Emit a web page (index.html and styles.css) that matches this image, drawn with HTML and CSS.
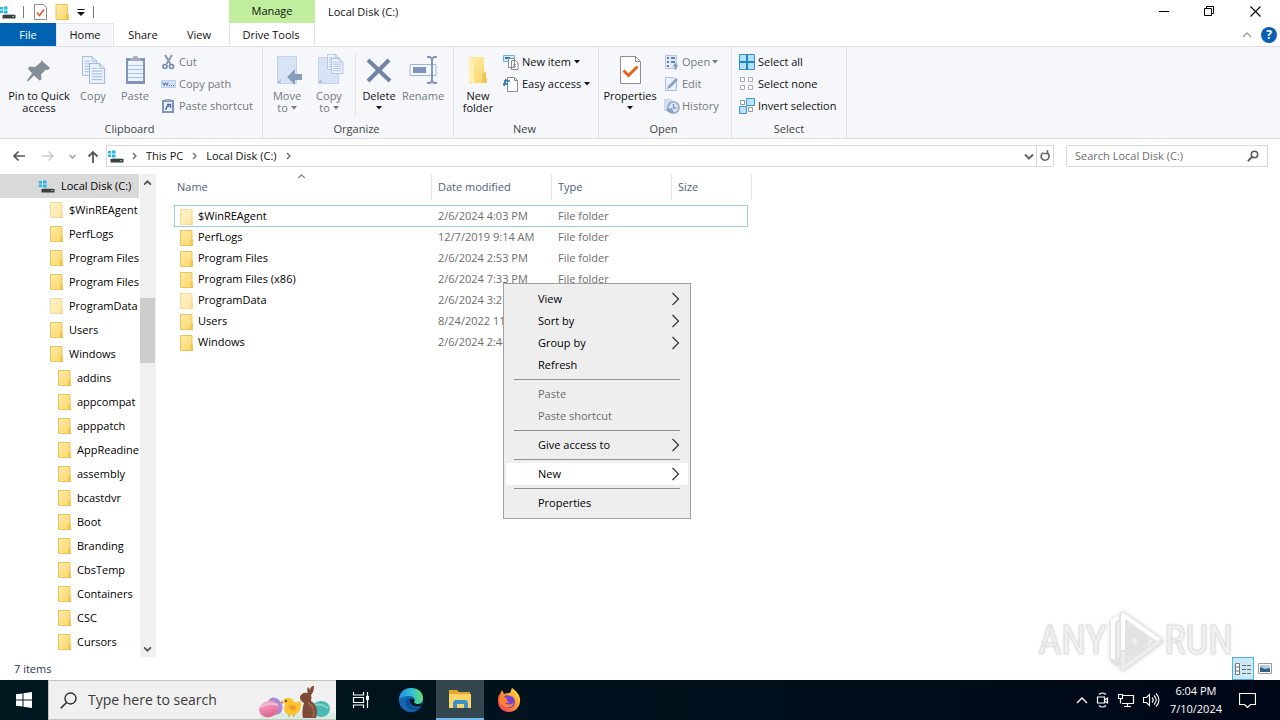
FILE: index.html
```html
<!DOCTYPE html>
<html lang="en">
<head>
<meta charset="utf-8">
<title>Local Disk (C:)</title>
<link rel="stylesheet" href="styles.css">
</head>
<body>
<svg class="defs" aria-hidden="true">
  <defs>
    <linearGradient id="gold" x1="0" y1="0" x2="1" y2="1"><stop offset="0" stop-color="#ffecaa"/><stop offset="1" stop-color="#fbd565"/></linearGradient>
    <linearGradient id="egg" x1="0" y1="0" x2="0" y2="1"><stop offset="0" stop-color="#f3a7c2"/><stop offset="1" stop-color="#e0608f"/></linearGradient>
    <linearGradient id="edgeA" x1="0" y1="0" x2="1" y2="0"><stop offset="0" stop-color="#1d8fdc"/><stop offset=".55" stop-color="#35c1d0"/><stop offset="1" stop-color="#66e06a"/></linearGradient>
    <linearGradient id="fire" x1="1" y1="0" x2="0" y2="1"><stop offset="0" stop-color="#fff04f"/><stop offset=".45" stop-color="#ff9a2b"/><stop offset="1" stop-color="#f0286a"/></linearGradient>
  </defs>
  <symbol id="folder" viewBox="0 0 13 16"><path d="M.5.5h11.500v9l1 1v5H.5z" fill="url(#gold)" stroke="#e8c55c"/><path d="M10.500 15.500V11l1.500-1.500 1 1.500v4.500z" fill="#f6cd58" stroke="#e3b94a" stroke-width=".6"/></symbol>
  <symbol id="drive" viewBox="0 0 16 13"><path d="M0 1h3v2.500H0zM4 .5h3.500v3H4zM0 4.500h3V7H0zM4 4.500h3.500v3H4z" fill="#20b7e6"/><path d="M3 9l2-1h9l1.500 1.500H2z" fill="#b9bcc0"/><path d="M2.500 9H15.500V12.500H2.500z" fill="#3b3f42"/><path d="M12 10h2v1h-2z" fill="#5fd35f"/></symbol>
  <symbol id="sheet" viewBox="0 0 18 22"><path d="M.5.5h11l5 5v16H.5z" fill="#edf3fc" stroke="#9cb1d3"/><path d="M11.500.5v5h5M3 5.500h6M3 8.500h11M3 11.500h11M3 14.500h11M3 17.500h11" fill="none" stroke="#9bb5df"/></symbol>
  <symbol id="right" viewBox="0 0 9 14"><path d="M1.500 1l6 6-6 6" fill="none" stroke="#333" stroke-width="1.200"/></symbol>
  <symbol id="tiny" viewBox="0 0 5 8"><path d="M1 1l3 3-3 3" fill="none" stroke="#666" stroke-width="1.300"/></symbol>
  <symbol id="down" viewBox="0 0 6 4"><path d="M0 0h6L3 3.500z" fill="currentColor"/></symbol>
  <symbol id="chev" viewBox="0 0 10 7"><path d="M1 1.500l4 4 4-4" fill="none" stroke="currentColor" stroke-width="2"/></symbol>
  <symbol id="up" viewBox="0 0 10 6"><path d="M1 5l4-4 4 4" fill="none" stroke="currentColor" stroke-width="1.300"/></symbol>
  <symbol id="arrow" viewBox="0 0 14 12"><path d="M13 6H2M6.500 1.500L2 6l4.500 4.500" fill="none" stroke="currentColor" stroke-width="1.700"/></symbol>
</svg>

<div class="window">
  <header class="titlebar">
    <div class="quick">
      <svg width="16" height="13"><use href="#drive"/></svg>
      <i class="bar"></i>
      <button aria-label="Properties"><svg width="13" height="16" viewBox="0 0 13 16"><path d="M.5.5h9l3 3v12H.5z" fill="#fff" stroke="#8b8b8b"/><path d="M3 8.500l2.500 3L10 5.500" fill="none" stroke="#e2552a" stroke-width="1.600"/></svg></button>
      <button aria-label="New folder"><svg width="14" height="16"><use href="#folder"/></svg></button>
      <button aria-label="Customize"><svg width="8" height="8" viewBox="0 0 8 8"><path d="M.5 1.500h7" stroke="#111"/><path d="M0 4h8L4 8z" fill="#111"/></svg></button>
      <i class="bar"></i>
    </div>
    <div class="manage">Manage</div>
    <h1>Local Disk (C:)</h1>
    <div class="caption">
      <button aria-label="Minimize"><svg width="11" height="11" viewBox="0 0 11 11"><path d="M0 5.500h10" stroke="#000"/></svg></button>
      <button aria-label="Restore"><svg width="11" height="11" viewBox="0 0 11 11"><path d="M.5 2.500h7v7h-7zM2.500 2.500v-2h7v7h-2" fill="none" stroke="#000"/></svg></button>
      <button aria-label="Close"><svg width="11" height="11" viewBox="0 0 11 11"><path d="M.5.5l10 10M10.500.5l-10 10" stroke="#000" stroke-width="1.100"/></svg></button>
    </div>
  </header>
  <nav class="tabs">
    <button class="file">File</button>
    <button class="home">Home</button>
    <button>Share</button>
    <button class="view">View</button>
    <button class="tools">Drive Tools</button>
    <div class="help">
      <button aria-label="Collapse ribbon"><svg width="10" height="6"><use href="#up"/></svg></button>
      <button class="q" aria-label="Help">?</button>
    </div>
  </nav>

  <section class="ribbon">
    <div class="group g-clip">
      <div class="tools-row">
        <button class="big w72"><svg width="32" height="32" viewBox="0 0 32 32"><path d="M18 6l9 8-2 2-2-.5-5 5 .5 5-2 1-5.500-5-6 6-1-1 5-7-4-5 1.500-2 5.500.5 6-5z" fill="#858d96"/></svg><span>Pin to Quick access</span></button>
        <button class="big w36 off"><svg width="32" height="32" viewBox="0 0 32 32"><use href="#sheet" x="5" y="2" width="16" height="20"/><use href="#sheet" x="12" y="9" width="17" height="21"/></svg><span>Copy</span></button>
        <button class="big w48 off"><svg width="32" height="32" viewBox="0 0 32 32"><path d="M7 4h19v26H7z" fill="#8295b8"/><path d="M9 7h15v20H9z" fill="#edf3fd"/><path d="M11 4h3c0-3 5-3 5 0h3v3H11z" fill="#a4abb4"/><path d="M9 11.500h15M9 15.500h15M9 19.500h15M9 23.500h15" stroke="#a9c0e8"/></svg><span>Paste</span></button>
        <div class="stack off">
          <button><svg width="16" height="16" viewBox="0 0 16 16"><path d="M4 1l5.500 9M11 1L5.500 10" stroke="#8799b7" stroke-width="2"/><circle cx="4" cy="12.500" r="2" fill="none" stroke="#7183b3" stroke-width="1.600"/><circle cx="10.500" cy="12.500" r="2" fill="none" stroke="#7183b3" stroke-width="1.600"/></svg>Cut</button>
          <button><svg width="16" height="16" viewBox="0 0 16 16"><path d="M.5 4.500h14v7H.5z" fill="#d2dff5" stroke="#bdcce8"/><path d="M2 6.500l1 3 1.500-3 1.500 3 1-3M8 9.500h1M10 9.500h1M12 9.500h1" fill="none" stroke="#5871a5"/></svg>Copy path</button>
          <button><svg width="16" height="16" viewBox="0 0 16 16"><path d="M1 2h12v13H1z" fill="#8194b9"/><path d="M3 4h8v9H3z" fill="#eef3fb"/><path d="M4 1h6v2H4z" fill="#9da9bd"/><path d="M5 12c0-3 1-4 3-4M6 6.500h3.500V10" fill="none" stroke="#426aa9" stroke-width="1.500"/></svg>Paste shortcut</button>
        </div>
      </div>
      <div class="label">Clipboard</div>
    </div>
    <div class="group g-org">
      <div class="tools-row">
        <button class="big w42 off"><svg width="32" height="32" viewBox="0 0 32 32"><path d="M6.500 2.500h19v27h-19z" fill="#d8e4f6" stroke="#c5d3ea"/><path d="M6 28l4-3v4H6z" fill="#b3c4e3"/><path d="M16 23l8-8v5h7v6h-7v5z" fill="#899ebf"/></svg><span>Move<br>to <svg width="6" height="4"><use href="#down"/></svg></span></button>
        <button class="big w42 off"><svg width="32" height="32" viewBox="0 0 32 32"><path d="M5.500 3.500h20v26h-20z" fill="#d8e4f6" stroke="#c5d3ea"/><path d="M5 28l4-3v4H5z" fill="#b3c4e3"/><use href="#sheet" x="14" y="0" width="13" height="16"/><use href="#sheet" x="18" y="4" width="13" height="16"/></svg><span>Copy<br>to <svg width="6" height="4"><use href="#down"/></svg></span></button>
        <i class="divide"></i>
        <button class="big w42"><svg width="32" height="32" viewBox="0 0 32 32"><path d="M5 6l22 21M26 6L5 27" stroke="#7184a4" stroke-width="4"/></svg><span>Delete<br><svg width="6" height="4"><use href="#down"/></svg></span></button>
        <button class="big w46 off"><svg width="32" height="32" viewBox="0 0 32 32"><path d="M3 10.500h26v11H3z" fill="#f7f9fd" stroke="#9cb4dc"/><path d="M6 13h13v6H6z" fill="#7b93be"/><path d="M20 3h3l2 2 2-2h3M25 5v23M20 29h3l2-2 2 2h3" fill="none" stroke="#8396b3" stroke-width="2"/></svg><span>Rename</span></button>
      </div>
      <div class="label">Organize</div>
    </div>
    <div class="group g-new">
      <div class="tools-row">
        <button class="big w42"><svg width="32" height="32" viewBox="0 0 32 32"><path d="M7 3h15v18l3 3v5H7z" fill="url(#gold)"/><path d="M7 3l5 5v22l-5-3z" fill="#fff0b4"/><path d="M20 29v-9l4-3v12z" fill="#efc654"/></svg><span>New folder</span></button>
        <div class="stack">
          <button><svg width="16" height="16" viewBox="0 0 16 16"><path d="M.5 1.500h11v6H.5z" fill="#d5ebfa" stroke="#70aecf"/><path d="M2 4h5" stroke="#207fae" stroke-width="2"/><path d="M5.500 4.500h6v9h-6zM8.500 6.500h4l2.500 2.500v6.500H8.500z" fill="#fff" stroke="#858b92"/><path d="M10 10.500h3M10 12.500h3" stroke="#999"/></svg>New item <svg width="6" height="4"><use href="#down"/></svg></button>
          <button><svg width="16" height="16" viewBox="0 0 16 16"><path d="M4.500 1.500h7l3 3v11h-10z" fill="#fff" stroke="#848b94"/><path d="M11.500 1.500v3h3" fill="none" stroke="#848b94"/><path d="M1 5h6M0 8h5M3 3L1 10" stroke="#2379ab" stroke-width="1.500"/></svg>Easy access <svg width="6" height="4"><use href="#down"/></svg></button>
        </div>
      </div>
      <div class="label">New</div>
    </div>
    <div class="group g-open">
      <div class="tools-row">
        <button class="big w56"><svg width="32" height="32" viewBox="0 0 32 32"><path d="M6.500 2.500h15l5 5v22h-20z" fill="#fff" stroke="#909090"/><path d="M21.500 2.500v5h5" fill="none" stroke="#909090"/><path d="M9.500 16.500l5 5 9-9" fill="none" stroke="#e8611d" stroke-width="3"/></svg><span>Properties<br><svg width="6" height="4"><use href="#down"/></svg></span></button>
        <div class="stack off">
          <button><svg width="16" height="16" viewBox="0 0 16 16"><path d="M1.500 1.500h11v13h-11z" fill="#e3ebf8" stroke="#b4c4df"/><path d="M3 4h2M3 8h2M3 12h2M7 4h4M7 8h4" stroke="#637fad" stroke-width="2"/><path d="M10.500 15.500v-3h-2l3-3.500 3 3.500h-2v3z" fill="#8498b9"/></svg>Open <svg width="6" height="4"><use href="#down"/></svg></button>
          <button><svg width="16" height="16" viewBox="0 0 16 16"><path d="M1.500 1.500h8l3 3v10h-11z" fill="#e7effb" stroke="#a9bddf"/><path d="M3 13l1-3 8-8 2 2-8 8z" fill="#8da2c3"/></svg>Edit</button>
          <button><svg width="16" height="16" viewBox="0 0 16 16"><path d="M0 1h7l3 3v9H0z" fill="#cfdcf1"/><circle cx="9.500" cy="9.500" r="5.500" fill="#dee8f8" stroke="#94a7c7" stroke-width="1.600"/><path d="M9.500 6v4h3" fill="none" stroke="#7c94bd" stroke-width="1.400"/><path d="M2 11l6-1 2 5c-4 1-7-1-8-4z" fill="#8da2c3"/></svg>History</button>
        </div>
      </div>
      <div class="label">Open</div>
    </div>
    <div class="group g-sel">
      <div class="tools-row">
        <div class="stack">
          <button><svg width="16" height="16" viewBox="0 0 16 16"><path d="M.5.5h15v15H.5z" fill="#b4e0fa" stroke="#3693d1"/><path d="M8 0v16M0 8h16" stroke="#2085ca" stroke-width="2"/></svg>Select all</button>
          <button><svg width="16" height="16" viewBox="0 0 16 16"><path d="M1.500 1.500h4v4h-4zM9.500 1.500h4v4h-4zM1.500 9.500h4v4h-4zM9.500 9.500h4v4h-4z" fill="#fff" stroke="#aaa"/></svg>Select none</button>
          <button><svg width="16" height="16" viewBox="0 0 16 16"><path d="M7.500.5h8v7h-8zM.5 8.500h7v7h-7z" fill="#b9e3fb" stroke="#4098d2"/><path d="M1.500 2.500h4v4h-4zM9.500 9.500h4v4h-4z" fill="#fff" stroke="#8f9aa2"/></svg>Invert selection</button>
        </div>
      </div>
      <div class="label">Select</div>
    </div>
  </section>

  <div class="nav">
    <div class="arrows">
      <button aria-label="Back"><svg width="14" height="12"><use href="#arrow"/></svg></button>
      <button class="dim" aria-label="Forward"><svg width="14" height="12" viewBox="0 0 14 12"><path d="M1 6h11M7.500 1.500L12 6l-4.500 4.500" fill="none" stroke="currentColor" stroke-width="1.500"/></svg></button>
      <button class="recent" aria-label="Recent"><svg width="7" height="5"><use href="#chev"/></svg></button>
      <button aria-label="Up"><svg width="12" height="13" viewBox="0 0 12 13"><path d="M6 13V2M1.500 6.500L6 2l4.500 4.500" fill="none" stroke="currentColor" stroke-width="1.800"/></svg></button>
    </div>
    <div class="address">
      <svg width="16" height="13"><use href="#drive"/></svg>
      <svg width="5" height="8"><use href="#tiny"/></svg>
      <a href="#pc">This PC</a>
      <svg width="5" height="8"><use href="#tiny"/></svg>
      <a href="#c">Local Disk (C:)</a>
      <svg width="5" height="8"><use href="#tiny"/></svg>
      <button class="history" aria-label="Previous locations"><svg width="10" height="7"><use href="#chev"/></svg></button>
      <button class="refresh" aria-label="Refresh"><svg width="12" height="12" viewBox="0 0 12 12"><path d="M8 2.800a4 4 0 1 1-4.500.2M3.500 0v3.500h4" transform="matrix(-1 0 0 1 12 0)" fill="none" stroke="#666" stroke-width="1.600"/></svg></button>
    </div>
    <div class="search">
      <input type="text" aria-label="Search Local Disk (C:)" placeholder="Search Local Disk (C:)">
      <svg width="12" height="12" viewBox="0 0 12 12"><circle cx="7.500" cy="4.500" r="3.200" fill="none" stroke="#555" stroke-width="1.500"/><path d="M5 7L.8 11.200" stroke="#555" stroke-width="1.800"/></svg>
    </div>
  </div>

  <main class="main">
    <ul class="tree">
      <li class="root"><svg width="16" height="13"><use href="#drive"/></svg>Local Disk (C:)</li>
      <li class="pale"><svg width="13" height="16"><use href="#folder"/></svg>$WinREAgent</li>
      <li><svg width="13" height="16"><use href="#folder"/></svg>PerfLogs</li>
      <li><svg width="13" height="16"><use href="#folder"/></svg>Program Files</li>
      <li><svg width="13" height="16"><use href="#folder"/></svg>Program Files (x86)</li>
      <li class="pale"><svg width="13" height="16"><use href="#folder"/></svg>ProgramData</li>
      <li><svg width="13" height="16"><use href="#folder"/></svg>Users</li>
      <li><svg width="13" height="16"><use href="#folder"/></svg>Windows</li>
      <li class="sub"><svg width="13" height="16"><use href="#folder"/></svg>addins</li>
      <li class="sub"><svg width="13" height="16"><use href="#folder"/></svg>appcompat</li>
      <li class="sub"><svg width="13" height="16"><use href="#folder"/></svg>apppatch</li>
      <li class="sub"><svg width="13" height="16"><use href="#folder"/></svg>AppReadiness</li>
      <li class="sub"><svg width="13" height="16"><use href="#folder"/></svg>assembly</li>
      <li class="sub"><svg width="13" height="16"><use href="#folder"/></svg>bcastdvr</li>
      <li class="sub"><svg width="13" height="16"><use href="#folder"/></svg>Boot</li>
      <li class="sub"><svg width="13" height="16"><use href="#folder"/></svg>Branding</li>
      <li class="sub"><svg width="13" height="16"><use href="#folder"/></svg>CbsTemp</li>
      <li class="sub"><svg width="13" height="16"><use href="#folder"/></svg>Containers</li>
      <li class="sub"><svg width="13" height="16"><use href="#folder"/></svg>CSC</li>
      <li class="sub"><svg width="13" height="16"><use href="#folder"/></svg>Cursors</li>
    </ul>
    <div class="scroll">
      <svg class="flip" width="9" height="6"><use href="#chev"/></svg>
      <div class="track"><div class="thumb"></div></div>
      <svg width="9" height="6"><use href="#chev"/></svg>
    </div>
    <div class="files">
      <table>
        <colgroup><col class="c-name"><col class="c-mid"><col class="c-mid"><col class="c-size"><col class="c-end"></colgroup>
        <thead><tr><th><div>Name<svg class="sort" width="9" height="5"><use href="#up"/></svg></div></th><th><div>Date modified</div></th><th><div>Type</div></th><th colspan="2"><div>Size</div></th></tr></thead>
        <tbody>
          <tr class="focus pale"><td><svg width="13" height="16"><use href="#folder"/></svg>$WinREAgent</td><td>2/6/2024 4:03 PM</td><td>File folder</td><td></td></tr>
          <tr><td><svg width="13" height="16"><use href="#folder"/></svg>PerfLogs</td><td>12/7/2019 9:14 AM</td><td>File folder</td><td></td></tr>
          <tr><td><svg width="13" height="16"><use href="#folder"/></svg>Program Files</td><td>2/6/2024 2:53 PM</td><td>File folder</td><td></td></tr>
          <tr><td><svg width="13" height="16"><use href="#folder"/></svg>Program Files (x86)</td><td>2/6/2024 7:33 PM</td><td>File folder</td><td></td></tr>
          <tr class="pale"><td><svg width="13" height="16"><use href="#folder"/></svg>ProgramData</td><td>2/6/2024 3:21 PM</td><td>File folder</td><td></td></tr>
          <tr><td><svg width="13" height="16"><use href="#folder"/></svg>Users</td><td>8/24/2022 11:06 AM</td><td>File folder</td><td></td></tr>
          <tr><td><svg width="13" height="16"><use href="#folder"/></svg>Windows</td><td>2/6/2024 2:44 PM</td><td>File folder</td><td></td></tr>
        </tbody>
      </table>
    </div>
  </main>

  <footer class="status">
    <span>7 items</span>
    <div class="modes">
      <button class="on" aria-label="Details"><svg width="18" height="14" viewBox="0 0 18 14"><path d="M1.500 1.500h4v11h-4z" fill="#fff" stroke="#777"/><path d="M1.500 5h4M1.500 9h4M8 3.500h4M13 3.500h4M8 7.500h4M13 7.500h4M8 11.500h4M13 11.500h4" stroke="#666"/></svg></button>
      <button aria-label="Large icons"><svg width="14" height="12" viewBox="0 0 14 12"><path d="M.5.5h13v10H.5z" fill="#fff" stroke="#999"/><path d="M2 2h10v7H2z" fill="#a9cdea"/><path d="M2 4l5 2 5-1v4H2z" fill="#365f7f"/></svg></button>
    </div>
  </footer>

  <nav class="taskbar">
    <button class="start" aria-label="Start"><svg width="16" height="16" viewBox="0 0 16 16"><path d="M0 2.300L6.500 1.400v6.100H0zM7.500 1.200L16 0v7.500H7.500zM0 8.500h6.500v6.100L0 13.700zM7.500 8.500H16V16l-8.500-1.200z" fill="#fff"/></svg></button>
    <div class="find">
      <svg width="17" height="17" viewBox="0 0 17 17"><circle cx="10.500" cy="6.500" r="5.500" fill="none" stroke="#222" stroke-width="1.300"/><path d="M6.500 10.500L.8 16.200" stroke="#222" stroke-width="1.500"/></svg>
      <input type="text" aria-label="Search" placeholder="Type here to search">
      <svg class="easter" width="78" height="38" viewBox="0 0 78 38"><path d="M0 38c8-7 20-5 30-6s30-5 48 1v5z" fill="#d7ebe0"/><ellipse cx="17" cy="25" rx="7" ry="9" transform="rotate(-30 17 25)" fill="#a78bd8"/><ellipse cx="11" cy="28" rx="10" ry="8" transform="rotate(-18 11 28)" fill="url(#egg)"/><path d="M3 26c6-4 11-4 17-2" stroke="#f5bfd2" stroke-width="2" fill="none"/><path d="M25 20c2-5 10-4 11 1 3 1 5-1 7 0 1 10-5 14-11 13-6-1-7-6-5-10z" fill="#fdc232"/><path d="M25 20l-3 1 3 2z" fill="#ee7a25"/><path d="M31 25c4-2 7 0 7 3-3 3-7 1-7-3z" fill="#ee9d20"/><path d="M31 33v3M36 33v3" stroke="#e8872a"/><circle cx="28" cy="20" r="1" fill="#333"/><ellipse cx="63" cy="28" rx="9" ry="8" fill="#4bb8b5"/><path d="M55 25c6-3 11-1 15 2" stroke="#85d8ca" stroke-width="2" fill="none"/><path d="M42 17c0-4 4-6 8-5-1-2-1-4 0-6 1 1 2 2 2 4 0-3 1-5 4-5 0 4-1 7-3 9 1 3 0 4 0 6 6 4 7 10 5 17H45c-1-5-1-9 1-15-2-1-4-3-4-5z" fill="#7d4b36"/><path d="M50 22c5 2 7 8 5 14" stroke="#9d674a" stroke-width="2" fill="none"/></svg>
    </div>
    <button class="app" aria-label="Task View"><svg width="18" height="16" viewBox="0 0 18 16"><path d="M1.500 0v3h10V0M1.500 16v-3h10v3M1.500 5.500h10v5h-10zM15.500 0v16" fill="none" stroke="#fff" stroke-width="1.200"/><path d="M14 4h3v4h-3z" fill="#fff"/></svg></button>
    <button class="app" aria-label="Edge"><svg width="24" height="24" viewBox="0 0 24 24"><circle cx="12" cy="12" r="12" fill="#1267b4"/><path d="M0 12C0 4 6 0 12 0c7 0 12 4 12 10 0 4-3 6-6 6-2 0-4-1-3-2 2-2 0-6-4-6C6 8 1 9 0 12z" fill="url(#edgeA)"/><path d="M9 10c-3 2-3 7 0 10 3 3 9 2 12 0-5 1-12-2-10-9z" fill="#0b4d97"/><path d="M11 11c-1 6 5 9 11 7l1-3c-3 2-8 1-8-1 1-1 1-4-4-3z" fill="#001821"/></svg></button>
    <button class="app on" aria-label="File Explorer"><svg width="22" height="20" viewBox="0 0 22 20"><path d="M0 1h8l2 2h11v6H0z" fill="#e6a52c"/><path d="M0 5h22v14H0z" fill="#fbd568"/><path d="M4 19v-6l2-2h11l2 2v6h-4v-4H8v4z" fill="#3f91c9"/></svg></button>
    <button class="app" aria-label="Firefox"><svg width="24" height="24" viewBox="0 0 24 24"><path d="M3 6l2-4 2 4c2-1 4-1 6-1l2-5c4 3 9 7 8 14-1 6-5 10-11 10S1 20 1 13c0-3 0-5 2-7z" fill="url(#fire)"/><path d="M7 9c1-2 4-2 6-1 3 0 5 3 5 6 0 4-3 6-6 6-4 0-6-3-6-6l4 1c2 0 2-2 0-2z" fill="#7542d3"/><path d="M3 8c3 0 4 1 5 2l3 1-3 2c-1 4 6 5 9 1-1 7-11 7-14 1z" fill="#ff852f"/></svg></button>
    <div class="tray">
      <button aria-label="Hidden icons"><svg width="12" height="8" viewBox="0 0 12 8"><path d="M1 7l5-5 5 5" fill="none" stroke="#fff" stroke-width="1.300"/></svg></button>
      <button aria-label="Meet now"><svg width="14" height="16" viewBox="0 0 14 16"><path d="M3 2.500c2-2 5-2 7 0M3 13.500c2 2 5 2 7 0M1.500 5h7v6h-7zM8.500 8l3-2v5l-3-2" fill="none" stroke="#fff" stroke-width="1.200"/></svg></button>
      <button aria-label="Network"><svg width="17" height="15" viewBox="0 0 17 15"><path d="M4.500 2.500h11v8H4M9.500 10.500v3M6 13.500h7M.5 1.500h4v4h-4zM2.500 5.500v5" fill="none" stroke="#fff" stroke-width="1.200"/></svg></button>
      <button aria-label="Volume"><svg width="17" height="14" viewBox="0 0 17 14"><path d="M.5 4.500h3l3-3v11l-3-3h-3zM9 4.500c1.500 1.500 1.500 3.500 0 5M11 2.500c3 3 3 6 0 9M13 .5c4 4 4 9 0 13" fill="none" stroke="#fff" stroke-width="1.100"/></svg></button>
      <time>6:04 PM<br>7/10/2024</time>
      <button class="note" aria-label="Notifications"><svg width="17" height="16" viewBox="0 0 17 16"><path d="M.5 1.500h16v11h-5l-3 3-3-3h-5z" fill="none" stroke="#fff" stroke-width="1.200"/></svg></button>
    </div>
  </nav>
</div>

<div class="menu" role="menu">
  <button role="menuitem">View<svg width="9" height="14"><use href="#right"/></svg></button>
  <button role="menuitem">Sort by<svg width="9" height="14"><use href="#right"/></svg></button>
  <button role="menuitem">Group by<svg width="9" height="14"><use href="#right"/></svg></button>
  <button role="menuitem">Refresh</button>
  <hr>
  <button role="menuitem" disabled>Paste</button>
  <button role="menuitem" disabled>Paste shortcut</button>
  <hr>
  <button role="menuitem">Give access to<svg width="9" height="14"><use href="#right"/></svg></button>
  <hr>
  <button role="menuitem" class="hot">New<svg width="9" height="14"><use href="#right"/></svg></button>
  <hr>
  <button role="menuitem">Properties</button>
</div>

<div class="brand">
  <span>ANY</span>
  <svg width="58" height="62" viewBox="0 0 58 62"><g fill="none" stroke-linejoin="round"><path d="M6 11v38l6 5M16 5l37 26-37 27zM22 20v23l16-12z" stroke="#e2e2e2" stroke-width="6"/><path d="M6 49V11l5-4M16 40V5l37 26" stroke="#fff" stroke-width="4"/><path d="M53 31L16 58V42" stroke="#ededed" stroke-width="4"/></g></svg>
  <span>RUN</span>
</div>
</body>
</html>
```
FILE: styles.css
```css
* { box-sizing: border-box; }
body {
  margin: 0;
  font-family: "Open Sans", "Noto Sans", sans-serif;
  font-size: 11px;
  line-height: 12px;
  color: #111;
  background: #fff;
}
button {
  font: inherit;
  color: inherit;
  background: none;
  border: 0;
  padding: 0;
  display: flex;
  align-items: center;
  justify-content: center;
}
input { font: inherit; border: 0; padding: 0; background: none; min-width: 0; outline: 0; }
a { color: inherit; text-decoration: none; }
svg { flex: none; }
.defs { position: absolute; width: 0; height: 0; }
.window { display: flex; flex-direction: column; height: 100vh; overflow: hidden; }

.titlebar { display: flex; height: 23px; flex: none; }
.quick { width: 229px; display: flex; align-items: center; gap: 8px; padding-top: 1px; }
.quick .bar { width: 1px; height: 12px; background: #777; }
.quick > .bar:nth-child(2) { margin-left: -1px; margin-right: 2px; }
.manage { width: 86px; background: #c0ee9c; text-align: center; line-height: 21px; }
h1 { margin: 0 0 0 13px; font-size: 11px; font-weight: 400; line-height: 24px; flex: 1; }
.caption { display: flex; }
.caption button { width: 46px; padding-right: 4px; }
.caption button:first-child { padding-right: 2px; }

.tabs { display: flex; height: 23px; flex: none; }
.tabs > button { width: 58px; }
.tabs .file { width: 56px; background: #0063b1; color: #fff; }
.tabs .home { background: #f5f7fa; border: 1px solid #e3e5e8; border-bottom: 0; }
.tabs .view { width: 54px; margin-right: 3px; }
.tabs .tools { width: 86px; border: solid #e0e6dc; border-width: 0 1px; padding-right: 2px; }
.help { margin-left: auto; display: flex; align-items: center; gap: 9px; padding-right: 3px; color: #999; }
.help .q { width: 16px; height: 16px; border-radius: 50%; background: #0a5fb4; color: #fff; font-weight: 700; font-size: 12px; }

.ribbon { display: flex; flex: none; height: 93px; background: #f5f7fa; border: solid #dcdee0; border-width: 1px 0; }
.group { display: flex; flex-direction: column; padding: 4px 3px 2px; border-right: 1px solid #dfe2e6; color: #111; }
.g-clip { width: 263px; }
.g-org { width: 191px; }
.g-new { width: 145px; }
.g-open { width: 133px; }
.g-sel { width: 115px; }
.tools-row { display: flex; flex: 1; }
.big { flex-direction: column; justify-content: flex-start; padding-top: 3px; text-align: center; }
.big span { padding-top: 4px; }
.big > span > svg { vertical-align: 2px; }
.w36 { width: 36px; } .w42 { width: 42px; } .w46 { width: 46px; }
.w48 { width: 48px; } .w56 { width: 56px; } .w72 { width: 72px; }
.off { color: #737980; }
.divide { width: 1px; margin: 3px 2px 6px 5px; background: #e0e4e8; }
.stack { padding-left: 2px; }
.stack button { height: 22px; gap: 3px; white-space: nowrap; }
.stack.off button { gap: 2px; }
.g-new .stack, .g-sel .stack { padding-left: 4px; }
.g-open .stack { padding-left: 6px; }
.label { text-align: center; color: #444; line-height: 14px; }
.g-clip .label, .g-org .label, .g-new .label, .g-open .label { padding-right: 3px; }

.nav { display: flex; align-items: center; flex: none; height: 34px; padding-right: 12px; }
.arrows { width: 106px; display: flex; align-items: center; padding-left: 12px; gap: 15px; color: #555; }
.arrows .dim { color: #ccc; }
.arrows .recent { margin: 0 -4px 0 -1px; color: #999; }
.address { flex: 1; height: 22px; border: 1px solid #d9d9d9; display: flex; align-items: center; padding-left: 1px; gap: 9px; }
.address > svg:first-child { margin-right: -1px; }
.history { margin-left: auto; margin-right: -7px; color: #666; }
.refresh { width: 17px; height: 20px; border-left: 1px solid #d9d9d9; }
.search { width: 202px; height: 22px; margin-left: 12px; border: 1px solid #d9d9d9; display: flex; align-items: center; padding: 0 8px; }
.search input { flex: 1; }
.search input::placeholder { color: #6d6d6d; opacity: 1; }

.main { display: flex; flex: 1; min-height: 0; padding-top: 1px; }
.tree { list-style: none; margin: 0; padding: 0; width: 139px; overflow: hidden; flex: none; }
.tree li { display: flex; align-items: center; height: 24px; gap: 6px; padding-left: 50px; white-space: nowrap; color: #000; }
.tree .root { padding-left: 39px; background: #d9d9d9; }
.tree .sub { padding-left: 58px; }
.pale svg { opacity: .6; }
.scroll { width: 16px; margin: 0 3px 0 1px; background: #f0f0f0; display: flex; flex-direction: column; align-items: center; padding: 6px 1px 5px 0; color: #555; flex: none; }
.scroll .flip { transform: rotate(180deg); }
.track { flex: 1; align-self: stretch; padding-top: 112px; }
.thumb { height: 65px; background: #cdcdcd; }
.files { flex: 1; padding-left: 15px; }
table { border-spacing: 0; table-layout: fixed; width: 578px; }
.c-name { width: 258px; } .c-mid { width: 120px; } .c-size { width: 76px; } .c-end { width: 4px; }
th { padding: 0 0 5px; text-align: left; font-weight: 400; color: #4c607a; }
th div { height: 26px; line-height: 26px; padding-left: 6px; border-right: 1px solid #e5e5e5; }
th:first-child div { padding-left: 3px; position: relative; }
.sort { position: absolute; left: 123px; top: 0; color: #777; }
td { height: 21px; padding: 0 0 1px 6px; color: #6d6d6d; white-space: nowrap; }
td:first-child { color: #000; }
td svg { vertical-align: middle; margin: -4px 5px -4px 0; }
.focus td { height: 22px; padding-bottom: 0; border: solid #99cbef; border-width: 1px 0; }
.focus td:first-child { border-left-width: 1px; padding-left: 5px; }
.focus td:last-child { border-right-width: 1px; }

.status { display: flex; align-items: center; flex: none; height: 23px; padding: 0 4px 0 14px; color: #26395c; }
.modes { margin-left: auto; display: flex; }
.modes button { width: 22px; height: 23px; }
.modes .on { background: #cce8f7; border: 1px solid #4bb4d6; }

.taskbar { display: flex; flex: none; height: 40px; background: linear-gradient(90deg, #001820, #00101c 60%, #000616); color: #fff; }
.start, .app { width: 48px; flex: none; }
.find { width: 288px; flex: none; background: #f0f0f0; border: 1px solid #c4c4c4; border-right: 0; display: flex; align-items: center; padding-left: 11px; gap: 11px; }
.find input { flex: 1; font-size: 14px; line-height: 20px; }
.find input::placeholder { color: #3a3a3a; opacity: 1; }
.app { margin-right: 1px; }
.find + .app { width: 50px; }
.app.on { background: #34464f; border-bottom: 2px solid #76b9ed; }
.tray { margin-left: auto; display: flex; align-items: center; gap: 8px; padding-right: 24px; }
.tray time { text-align: center; line-height: 18px; margin-left: 2px; }
.note { margin-left: 9px; }

.menu { position: absolute; left: 503px; top: 283px; width: 188px; padding: 4px 2px; background: #eee; border: 1px solid #a0a0a0; color: #000; }
.menu button { width: 100%; height: 22px; padding: 0 8px 0 32px; justify-content: space-between; }
.menu button:disabled { color: #6d6d6d; }
.menu .hot { background: #fff; }
.menu hr { height: 1px; margin: 3px 8px; border: 0; background: #919191; }

.brand { position: absolute; right: 47px; bottom: 48px; display: flex; align-items: center; font-family: "Liberation Sans Narrow", "Roboto Condensed", Roboto, sans-serif; font-size: 40px; line-height: 62px; color: #f3f3f3; -webkit-text-stroke: 1px #e2e2e2; text-shadow: 0 0 3px #ccc; pointer-events: none; }
.brand svg { filter: drop-shadow(0 0 2px #d0d0d0); }
```
